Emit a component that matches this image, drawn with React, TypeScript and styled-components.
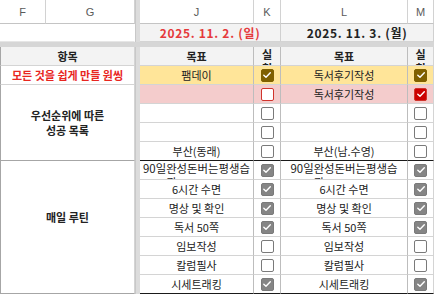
import React from "react";
import styled, { createGlobalStyle } from "styled-components";

const Global = createGlobalStyle`
  html, body { margin: 0; padding: 0; background: #fff; overflow: hidden; }
  body { font-family: "Noto Sans CJK KR", "Noto Sans", sans-serif; }
`;

const Sheet = styled.div`
  display: grid;
  grid-template-columns: 46px 89px 5px 114px 27px 127px 26px;
  grid-template-rows: 24px 18px 5px repeat(13, 19px);
  width: 434px;
`;

const FreezeCol = styled.div`
  grid-column: 3;
  grid-row: 1 / -1;
  background: #dcdcdc;
  border-left: 1px solid #c8c8c8;
  box-sizing: border-box;
`;

const FreezeRow = styled.div`
  grid-column: 1 / -1;
  grid-row: 3;
  background: #d6d6d6;
`;

const ColHead = styled.div`
  display: flex;
  align-items: center;
  justify-content: center;
  box-sizing: border-box;
  font-family: "Liberation Sans", Arial, sans-serif;
  font-size: 11px;
  color: #5a5a5a;
  background: #fff;
  border-right: 1px solid #d2d2d2;
  border-bottom: 1px solid #c4c4c4;
`;

type CellProps = {
  $span?: number;
  $rows?: number;
  $bg?: string;
  $color?: string;
  $bold?: boolean;
  $bb?: string;
  $br?: string;
  $bl?: string;
  $size?: number;
};

const Cell = styled.div<CellProps>`
  grid-column: span ${(p) => p.$span ?? 1};
  grid-row: span ${(p) => p.$rows ?? 1};
  display: flex;
  align-items: center;
  justify-content: center;
  box-sizing: border-box;
  overflow: hidden;
  background: ${(p) => p.$bg ?? "#fff"};
  color: ${(p) => p.$color ?? "#222"};
  font-weight: ${(p) => (p.$bold ? 700 : 400)};
  font-size: ${(p) => p.$size ?? 11}px;
  line-height: 15px;
  text-align: center;
  white-space: nowrap;
  border-right: 1px solid ${(p) => p.$br ?? "#d4d4d4"};
  border-bottom: 1px solid ${(p) => p.$bb ?? "#d4d4d4"};
  border-left: ${(p) => (p.$bl ? `1px solid ${p.$bl}` : "none")};
`;

const DateCell = styled(Cell)`
  letter-spacing: 0.7px;
`;

const LabelCell = styled(Cell)<{ $lift?: number }>`
  padding-bottom: ${(p) => p.$lift ?? 0}px;
`;

const WrapCell = styled(Cell)`
  display: block;
  white-space: normal;
  word-break: break-all;
  line-height: 14px;
  padding: 0 3px;
`;

const OverflowCell = styled(Cell)`
  flex-direction: column;
  justify-content: flex-start;
  font-size: 11.4px;
`;

const Line = styled.span`
  display: block;
  line-height: 14px;
  white-space: nowrap;
`;

const PeekLine = styled.span`
  display: block;
  line-height: 14px;
  margin-right: 50px;
`;

type BoxTone = "gray" | "olive" | "red";

const toneFill: Record<BoxTone, string> = {
  gray: "#858585",
  olive: "#7f6000",
  red: "#cc0000",
};

const toneBorder: Record<BoxTone, string> = {
  gray: "#7a7a7a",
  olive: "#7f6000",
  red: "#d0342c",
};

const Box = styled.span<{ $tone: BoxTone; $on: boolean }>`
  display: flex;
  align-items: center;
  justify-content: center;
  width: 13px;
  height: 13px;
  box-sizing: border-box;
  border-radius: 2px;
  border: 1.5px solid ${(p) => toneBorder[p.$tone]};
  background: ${(p) => (p.$on ? toneFill[p.$tone] : "#fff")};
`;

const Check = ({ on, tone = "gray" }: { on: boolean; tone?: BoxTone }) => (
  <Box $tone={tone} $on={on}>
    {on && (
      <svg width="10" height="10" viewBox="0 0 10 10">
        <polyline
          points="1.8,5.2 4,7.3 8.3,2.8"
          fill="none"
          stroke="#fff"
          strokeWidth="1.4"
          strokeLinecap="round"
          strokeLinejoin="round"
        />
      </svg>
    )}
  </Box>
);

const YELLOW = "#ffe599";
const PINK = "#f4cccc";
const DATEBG = "#f3f3f3";
const HEADBG = "#f3f3f3";
const VLINE = "#bdbdbd";
const BLACK = "#1a1a1a";
const LEFTLINE = "#a6a6a6";

type Row = { a: string; ac: boolean; b: string; bc: boolean; last?: boolean };

const routine: Row[] = [
  { a: "6시간 수면", ac: true, b: "6시간 수면", bc: true },
  { a: "명상 및 확인", ac: true, b: "명상 및 확인", bc: true },
  { a: "독서 50쪽", ac: true, b: "독서 50쪽", bc: true },
  { a: "임보작성", ac: false, b: "임보작성", bc: false },
  { a: "칼럼필사", ac: false, b: "칼럼필사", bc: false },
  { a: "시세트래킹", ac: true, b: "시세트래킹", bc: true, last: true },
];

export default function App() {
  return (
    <>
      <Global />
      <Sheet>
        <FreezeCol />
        <FreezeRow />

        {/* column letters */}
        <ColHead>F</ColHead>
        <ColHead>G</ColHead>
        <ColHead>J</ColHead>
        <ColHead>K</ColHead>
        <ColHead>L</ColHead>
        <ColHead>M</ColHead>

        {/* dates */}
        <Cell $span={2} $br="#fff" $bb="#e6e6e6" />
        <DateCell $span={2} $bg={DATEBG} $color="#e5393b" $bold $size={12} $br="#d0d0d0">
          2025. 11. 2. (일)
        </DateCell>
        <DateCell $span={2} $bg={DATEBG} $bold $size={12} $br="#d0d0d0">
          2025. 11. 3. (월)
        </DateCell>

        {/* header row */}
        <Cell $span={2} $bg={HEADBG} $bold $bl={LEFTLINE}>항목</Cell>
        <Cell $bg={HEADBG} $bold $br={VLINE}>목표</Cell>
        <WrapCell $bg={HEADBG} $bold $br={VLINE}>실천</WrapCell>
        <Cell $bg={HEADBG} $bold $br={VLINE}>목표</Cell>
        <WrapCell $bg={HEADBG} $bold>실천</WrapCell>

        {/* one thing */}
        <Cell $span={2} $color="#e8261f" $bold $bl={LEFTLINE}>
          모든 것을 쉽게 만들 원씽
        </Cell>
        <Cell $bg={YELLOW} $br={VLINE}>팸데이</Cell>
        <Cell $bg={YELLOW} $br={VLINE}><Check on tone="olive" /></Cell>
        <Cell $bg={YELLOW} $br={VLINE}>독서후기작성</Cell>
        <Cell $bg={YELLOW}><Check on tone="olive" /></Cell>

        {/* priorities */}
        <LabelCell $span={2} $rows={4} $bold $bb={LEFTLINE} $bl={LEFTLINE}>
          우선순위에 따른
          <br />
          성공 목록
        </LabelCell>
        <Cell $bg={PINK} $br={VLINE} />
        <Cell $bg={PINK} $br={VLINE}><Check on={false} tone="red" /></Cell>
        <Cell $bg={PINK} $br={VLINE}>독서후기작성</Cell>
        <Cell $bg={PINK}><Check on tone="red" /></Cell>

        <Cell $br={VLINE} />
        <Cell $br={VLINE}><Check on={false} /></Cell>
        <Cell $br={VLINE} />
        <Cell><Check on={false} /></Cell>

        <Cell $br={VLINE} />
        <Cell $br={VLINE}><Check on={false} /></Cell>
        <Cell $br={VLINE} />
        <Cell><Check on={false} /></Cell>

        <Cell $br={VLINE} $bb={BLACK}>부산(동래)</Cell>
        <Cell $br={VLINE} $bb={BLACK}><Check on={false} /></Cell>
        <Cell $br={VLINE} $bb={BLACK}>부산(남.수영)</Cell>
        <Cell $bb={BLACK}><Check on={false} /></Cell>

        {/* daily routine */}
        <LabelCell $span={2} $rows={7} $bold $bb={LEFTLINE} $bl={LEFTLINE} $lift={19}>
          매일 루틴
        </LabelCell>
        <OverflowCell $br={VLINE}>
          <Line>90일완성돈버는평생습</Line>
          <PeekLine>관</PeekLine>
        </OverflowCell>
        <Cell $br={VLINE}><Check on /></Cell>
        <OverflowCell $br={VLINE}>
          <Line>90일완성돈버는평생습</Line>
          <PeekLine>관</PeekLine>
        </OverflowCell>
        <Cell><Check on /></Cell>

        {routine.map((r) => (
          <React.Fragment key={r.a}>
            <Cell $br={VLINE} $bb={r.last ? BLACK : undefined}>{r.a}</Cell>
            <Cell $br={VLINE} $bb={r.last ? BLACK : undefined}><Check on={r.ac} /></Cell>
            <Cell $br={VLINE} $bb={r.last ? BLACK : undefined}>{r.b}</Cell>
            <Cell $bb={r.last ? BLACK : undefined}><Check on={r.bc} /></Cell>
          </React.Fragment>
        ))}
      </Sheet>
    </>
  );
}
